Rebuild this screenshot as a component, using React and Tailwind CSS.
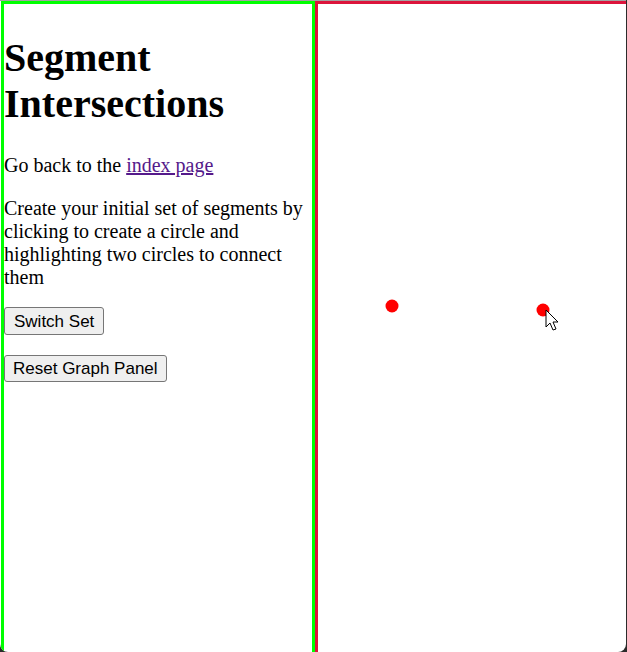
import React from 'react';

export default function App() {
  return (
    <div className="w-[627px] h-[652px] bg-[#2b2b2b] overflow-hidden">
      <div className="w-[626px] h-[652px] bg-white border-t border-[#a3a3a3] rounded-b-[8px] overflow-hidden flex font-['Liberation_Serif',serif] text-black">
        {/* left panel */}
        <div className="w-[314px] h-[654px] shrink-0 border-[3px] border-[#00ff00] ml-[1px]">
          <h1 className="text-[40px] font-bold leading-[46px] mt-[31px] mb-[27px]">Segment Intersections</h1>
          <p className="text-[20px] leading-[23px] my-[20px]">
            Go back to the{' '}
            <a href="#" className="text-[#551a8b] underline">index page</a>
          </p>
          <p className="text-[20px] leading-[23px] mt-[20px] mb-[18px]">
            Create your initial set of segments by clicking to create a circle and highlighting two circles to connect them
          </p>
          <div className="mb-[20px] flex">
            <button className="h-[28px] px-[9px] bg-[#efefef] border border-[#767676] rounded-[3px] font-['Liberation_Sans',Arial,sans-serif] text-[17px] leading-none text-black">
              Switch Set
            </button>
          </div>
          <div className="flex">
            <button className="h-[27px] px-[8px] bg-[#efefef] border border-[#767676] rounded-[3px] font-['Liberation_Sans',Arial,sans-serif] text-[17px] leading-none text-black">
              Reset Graph Panel
            </button>
          </div>
        </div>
        {/* right panel: drawing canvas */}
        <div className="relative flex-1 h-[654px] border-t-[3px] border-l-[3px] border-[#dc143c]">
          <svg className="absolute left-0 top-0" width="310" height="650">
            <circle cx="74" cy="302" r="6.5" fill="#ff0000" />
            <circle cx="225" cy="306" r="6.5" fill="#ff0000" />
            <path
              d="M228 306 L228 323 L232 319 L235 326 L238 325 L235 318 L240 318 Z"
              fill="#ffffff"
              stroke="#000000"
              strokeWidth="1"
              strokeLinejoin="round"
            />
          </svg>
        </div>
      </div>
    </div>
  );
}
